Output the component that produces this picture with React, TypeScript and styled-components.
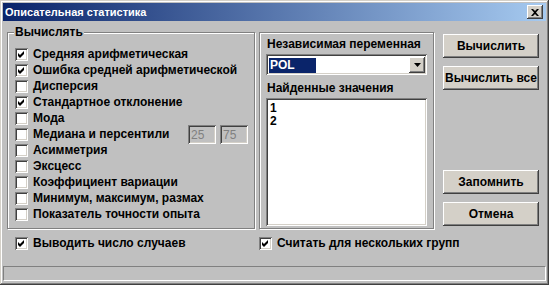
import React from "react";
import styled, { createGlobalStyle } from "styled-components";

const GlobalStyle = createGlobalStyle`
  html, body {
    margin: 0;
    padding: 0;
    background: #c0c0c0;
  }
  * {
    box-sizing: border-box;
  }
`;

const checks = [
  { label: "Средняя арифметическая", on: true },
  { label: "Ошибка средней арифметической", on: true },
  { label: "Дисперсия", on: false },
  { label: "Стандартное отклонение", on: true },
  { label: "Мода", on: false },
  { label: "Медиана и персентили", on: false, range: ["25", "75"] },
  { label: "Асимметрия", on: false },
  { label: "Эксцесс", on: false },
  { label: "Коэффициент вариации", on: false },
  { label: "Минимум, максимум, размах", on: false },
  { label: "Показатель точности опыта", on: false },
];

const CheckBox = ({ on }: { on: boolean }) => (
  <Box>
    {on && (
      <svg width="9" height="9" viewBox="0 0 9 9">
        <path d="M1 3 L3 5 L7 1 L7 4 L3 8 L1 6 Z" fill="#000" />
      </svg>
    )}
  </Box>
);

export default function App() {
  return (
    <>
      <GlobalStyle />
      <Window>
        <TitleBar>
          <span>Описательная статистика</span>
          <CloseButton>
            <svg width="8" height="7" viewBox="0 0 8 7">
              <path
                d="M0 0 H2 L4 2 L6 0 H8 L5 3.5 L8 7 H6 L4 5 L2 7 H0 L3 3.5 Z"
                fill="#000"
              />
            </svg>
          </CloseButton>
        </TitleBar>

        <Main>
          <Group $width={248}>
            <Legend>Вычислять</Legend>
            <CheckList>
              {checks.map((c) => (
                <CheckRow key={c.label}>
                  <CheckBox on={c.on} />
                  <span>{c.label}</span>
                  {c.range && (
                    <Range>
                      {c.range.map((v) => (
                        <SmallInput key={v}>{v}</SmallInput>
                      ))}
                    </Range>
                  )}
                </CheckRow>
              ))}
            </CheckList>
          </Group>

          <Group $width={175}>
            <RightInner>
              <FieldLabel>Независимая переменная</FieldLabel>
              <Combo>
                <Selected>POL</Selected>
                <DropButton>
                  <svg width="7" height="4" viewBox="0 0 7 4">
                    <path d="M0 0 H7 L3.5 4 Z" fill="#000" />
                  </svg>
                </DropButton>
              </Combo>
              <FieldLabel $top={7}>Найденные значения</FieldLabel>
              <ListBox>
                <div>1</div>
                <div>2</div>
              </ListBox>
            </RightInner>
          </Group>

          <ButtonCol>
            <Button>Вычислить</Button>
            <Button>Вычислить все</Button>
            <Spacer />
            <Button>Запомнить</Button>
            <Button>Отмена</Button>
          </ButtonCol>
        </Main>

        <BottomRow>
          <CheckRow $width={244}>
            <CheckBox on />
            <span>Выводить число случаев</span>
          </CheckRow>
          <CheckRow>
            <CheckBox on />
            <span>Считать для нескольких групп</span>
          </CheckRow>
        </BottomRow>

        <StatusBar />
      </Window>
    </>
  );
}

const Window = styled.div`
  width: 549px;
  height: 285px;
  display: flex;
  flex-direction: column;
  padding: 3px;
  background: #c0c0c0;
  box-shadow: inset -1px -1px #404040, inset 1px 1px #d4d0c8,
    inset -2px -2px #808080, inset 2px 2px #fff;
  font-family: "Liberation Sans", Arial, sans-serif;
  font-size: 12px;
  font-weight: bold;
  color: #000;
`;

const TitleBar = styled.div`
  height: 18px;
  display: flex;
  align-items: center;
  padding: 0 3px 0 2px;
  background: linear-gradient(to right, #0a246a, #a6caf0);
  color: #fff;
  font-size: 11px;
  font-weight: bold;
`;

const CloseButton = styled.div`
  margin-left: auto;
  width: 16px;
  height: 14px;
  display: flex;
  align-items: center;
  justify-content: center;
  background: #d4d0c8;
  box-shadow: inset -1px -1px #404040, inset 1px 1px #fff,
    inset -2px -2px #808080;
`;

const Main = styled.div`
  display: flex;
  height: 197px;
  margin-top: 11px;
  padding-left: 4px;
  gap: 4px;
`;

const Group = styled.div<{ $width: number }>`
  position: relative;
  width: ${(p) => p.$width}px;
  border: 1px solid #808080;
  box-shadow: inset 1px 1px #fff, 1px 1px #fff;
`;

const Legend = styled.div`
  position: absolute;
  top: -8px;
  left: 6px;
  padding: 0 1px;
  line-height: 14px;
  background: #c0c0c0;
`;

const CheckList = styled.div`
  display: flex;
  flex-direction: column;
  padding: 13px 6px 0 7px;
`;

const CheckRow = styled.div<{ $width?: number }>`
  display: flex;
  align-items: center;
  gap: 5px;
  height: 16px;
  white-space: nowrap;
  ${(p) => (p.$width ? `width: ${p.$width}px;` : "")}
`;

const Box = styled.div`
  width: 13px;
  height: 13px;
  flex: none;
  display: flex;
  align-items: center;
  justify-content: center;
  background: #fff;
  box-shadow: inset 1px 1px #808080, inset -1px -1px #fff,
    inset 2px 2px #404040, inset -2px -2px #d4d0c8;
`;

const Range = styled.div`
  display: flex;
  gap: 4px;
  margin-left: auto;
`;

const SmallInput = styled.div`
  width: 28px;
  height: 19px;
  padding: 3px 0 0 3px;
  color: #808080;
  font-weight: normal;
  font-size: 12px;
  box-shadow: inset 1px 1px #808080, inset -1px -1px #fff,
    inset 2px 2px #404040, inset -2px -2px #d4d0c8;
`;

const RightInner = styled.div`
  display: flex;
  flex-direction: column;
  padding: 5px 6px 0 6px;
`;

const FieldLabel = styled.div<{ $top?: number }>`
  line-height: 13px;
  margin-top: ${(p) => p.$top ?? 0}px;
  margin-left: 1px;
`;

const Combo = styled.div`
  margin-top: 3px;
  height: 21px;
  display: flex;
  align-items: center;
  padding: 3px 2px 2px 3px;
  background: #fff;
  box-shadow: inset 1px 1px #808080, inset -1px -1px #fff,
    inset 2px 2px #404040, inset -2px -2px #d4d0c8;
`;

const Selected = styled.div`
  width: 47px;
  height: 15px;
  line-height: 15px;
  padding-left: 1px;
  background: #0a246a;
  color: #fff;
`;

const DropButton = styled.div`
  margin-left: auto;
  width: 16px;
  height: 16px;
  display: flex;
  align-items: center;
  justify-content: center;
  background: #d4d0c8;
  box-shadow: inset -1px -1px #404040, inset 1px 1px #fff,
    inset -2px -2px #808080;
`;

const ListBox = styled.div`
  margin-top: 3px;
  height: 128px;
  padding: 4px 4px;
  line-height: 13px;
  background: #fff;
  box-shadow: inset 1px 1px #808080, inset -1px -1px #fff,
    inset 2px 2px #404040, inset -2px -2px #d4d0c8;
`;

const ButtonCol = styled.div`
  display: flex;
  flex-direction: column;
  gap: 8px;
  margin-left: 5px;
  padding: 2px 0 3px;
`;

const Spacer = styled.div`
  flex: 1;
`;

const Button = styled.div`
  width: 96px;
  height: 24px;
  display: flex;
  align-items: center;
  justify-content: center;
  background: #d4d0c8;
  box-shadow: inset -1px -1px #404040, inset 1px 1px #fff,
    inset -2px -2px #808080;
`;

const BottomRow = styled.div`
  display: flex;
  margin-top: 6px;
  padding-left: 12px;
`;

const StatusBar = styled.div`
  margin-top: auto;
  margin-bottom: 1px;
  height: 15px;
  border-top: 1px solid #808080;
  border-left: 1px solid #808080;
  border-bottom: 1px solid #fff;
  border-right: 1px solid #fff;
`;
